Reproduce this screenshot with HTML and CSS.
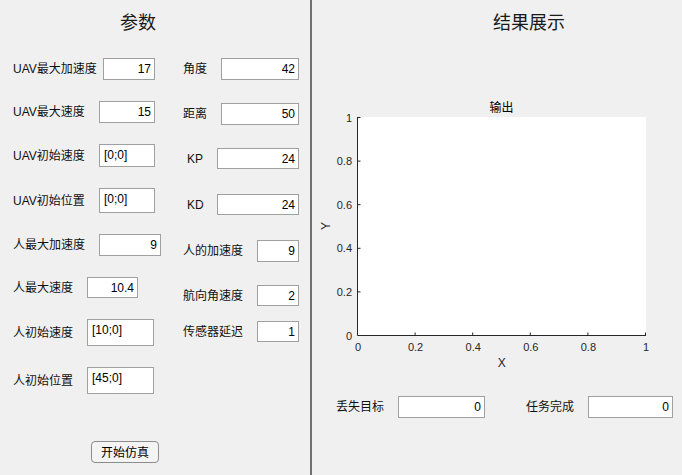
FILE: index.html
```html
<!DOCTYPE html>
<html lang="zh-CN">
<head>
<meta charset="utf-8">
<title>UAV 仿真</title>
<link rel="stylesheet" href="styles.css">
</head>
<body>
<div class="app">
  <section class="panel params">
    <h1 class="title params-title">参数</h1>
    <div class="fields">
      <div class="col col-a">
        <div class="field"><label class="lbl w90">UAV最大加速度</label><input class="box num i52 h22" value="17"></div>
        <div class="field"><label class="lbl w86">UAV最大速度</label><input class="box num i56 h22" value="15"></div>
        <div class="field"><label class="lbl w86">UAV初始速度</label><textarea class="box txt i56 h23">[0;0]</textarea></div>
        <div class="field"><label class="lbl w86">UAV初始位置</label><textarea class="box txt i56 h25">[0;0]</textarea></div>
        <div class="field"><label class="lbl w86">人最大加速度</label><input class="box num i62 h22" value="9"></div>
        <div class="field"><label class="lbl w74">人最大速度</label><input class="box num i51 h21" value="10.4"></div>
        <div class="field"><label class="lbl w74">人初始速度</label><textarea class="box txt i67 h27">[10;0]</textarea></div>
        <div class="field"><label class="lbl w74">人初始位置</label><textarea class="box txt i67 h27">[45;0]</textarea></div>
      </div>
      <div class="col col-b">
        <div class="field"><label class="lbl w38">角度</label><input class="box num i78 h22" value="42"></div>
        <div class="field"><label class="lbl w38">距离</label><input class="box num i78 h22" value="50"></div>
        <div class="field"><label class="lbl w30 indent">KP</label><input class="box num i82 h21" value="24"></div>
        <div class="field shift"><label class="lbl w30 indent">KD</label><input class="box num i82 h21" value="24"></div>
        <div class="field shift"><label class="lbl w74">人的加速度</label><input class="box num i42 h22" value="9"></div>
        <div class="field"><label class="lbl w74">航向角速度</label><input class="box num i42 h21" value="2"></div>
        <div class="field tight"><label class="lbl w74">传感器延迟</label><input class="box num i42 h21" value="1"></div>
      </div>
    </div>
    <button class="run-btn" type="button">开始仿真</button>
  </section>
  <section class="panel results">
    <h1 class="title results-title">结果展示</h1>
    <svg class="chart" width="370" height="280" viewBox="0 0 370 280" xmlns="http://www.w3.org/2000/svg">
      <text class="chart-title" x="189.5" y="17" text-anchor="middle">输出</text>
      <rect x="46" y="22" width="288" height="218" fill="#ffffff"/>
      <g stroke="#262626" stroke-width="1" fill="none">
        <path d="M45.5 22 V240.5 H334"/>
        <path d="M45.5 22.5 H48.5 M45.5 66.1 H48.5 M45.5 109.7 H48.5 M45.5 153.3 H48.5 M45.5 196.9 H48.5"/>
        <path d="M103.1 240.5 V237.5 M160.7 240.5 V237.5 M218.3 240.5 V237.5 M275.9 240.5 V237.5 M333.5 240.5 V237.5"/>
      </g>
      <g class="tick" text-anchor="end">
        <text x="40" y="26.5">1</text>
        <text x="40" y="70.1">0.8</text>
        <text x="40" y="113.7">0.6</text>
        <text x="40" y="157.3">0.4</text>
        <text x="40" y="200.9">0.2</text>
        <text x="40" y="244.5">0</text>
      </g>
      <g class="tick" text-anchor="middle">
        <text x="46" y="256">0</text>
        <text x="103.6" y="256">0.2</text>
        <text x="161.2" y="256">0.4</text>
        <text x="218.8" y="256">0.6</text>
        <text x="276.4" y="256">0.8</text>
        <text x="334" y="256">1</text>
      </g>
      <text class="axis-label" x="189.7" y="272" text-anchor="middle">X</text>
      <text class="axis-label" transform="translate(18 131) rotate(-90)" x="0" y="0" text-anchor="middle">Y</text>
    </svg>
    <div class="status">
      <label class="lbl w62">丢失目标</label><input class="box num i87 h22" value="0">
      <label class="lbl w62 gap-left">任务完成</label><input class="box num i85 h22" value="0">
    </div>
  </section>
</div>
</body>
</html>
```
FILE: styles.css
```css
html, body {
  margin: 0;
  padding: 0;
  width: 682px;
  height: 475px;
  overflow: hidden;
  background: #f0f0f0;
  font-family: "Liberation Sans", "Noto Sans CJK SC", sans-serif;
  font-size: 12px;
  color: #000;
}

.app {
  display: flex;
  width: 682px;
  height: 475px;
}

.panel {
  display: flex;
  flex-direction: column;
  box-sizing: border-box;
  height: 475px;
}

.params {
  width: 310px;
}

.results {
  width: 372px;
  border-left: 2px solid #707070;
}

.title {
  margin: 0;
  padding-top: 9px;
  font-weight: normal;
  font-size: 18px;
  line-height: 24px;
  font-family: "Noto Sans CJK SC", "Liberation Sans", sans-serif;
  color: #1a1a1a;
}

.params-title {
  padding-left: 120px;
}

.results-title {
  padding-left: 181px;
}

.fields {
  display: flex;
  margin-top: 25px;
}

.col {
  display: flex;
  flex-direction: column;
}

.col-a {
  width: 170px;
  padding-left: 13px;
  gap: 21px;
}

.col-b {
  gap: 23px;
}

.field {
  display: flex;
  align-items: center;
}

.shift {
  margin-top: 2px;
}

.tight {
  margin-top: -8px;
}

.lbl {
  display: block;
  flex: none;
  line-height: 16px;
  white-space: nowrap;
  color: #111;
}

.indent {
  padding-left: 4px;
}

.w90 { width: 90px; }
.w86 { width: 86px; }
.w74 { width: 74px; }
.w62 { width: 62px; }
.w38 { width: 38px; }
.w30 { width: 30px; }

.box {
  box-sizing: border-box;
  flex: none;
  margin: 0;
  border: 1px solid #a0a0a0;
  border-radius: 0;
  background: #ffffff;
  font-family: "Liberation Sans", "Noto Sans CJK SC", sans-serif;
  font-size: 12px;
  color: #000;
  outline: none;
}

.num {
  padding: 0 3px 0 4px;
  text-align: right;
  line-height: 14px;
}

.txt {
  padding: 3px 4px 0 4px;
  line-height: 14px;
  resize: none;
  overflow: hidden;
  text-align: left;
}

.i42 { width: 42px; }
.i51 { width: 51px; }
.i52 { width: 52px; }
.i56 { width: 56px; }
.i62 { width: 62px; }
.i67 { width: 67px; }
.i78 { width: 78px; }
.i82 { width: 82px; }
.i85 { width: 85px; }
.i87 { width: 87px; }

.h21 { height: 21px; }
.h22 { height: 22px; }
.h23 { height: 23px; }
.h25 { height: 25px; }
.h27 { height: 27px; }

.run-btn {
  align-self: flex-start;
  margin: 47px 0 0 91px;
  box-sizing: border-box;
  width: 68px;
  height: 22px;
  padding: 0;
  border: 1px solid #8c8c8c;
  border-radius: 4px;
  background: #f4f4f4;
  font-family: "Noto Sans CJK SC", "Liberation Sans", sans-serif;
  font-size: 12px;
  line-height: 18px;
  color: #000;
}

.chart {
  display: block;
  margin-top: 62px;
  flex: none;
}

.chart-title {
  font-family: "Noto Sans CJK SC", "Liberation Sans", sans-serif;
  font-size: 12px;
  fill: #000;
}

.tick text {
  font-family: "Liberation Sans", sans-serif;
  font-size: 11px;
  fill: #262626;
}

.axis-label {
  font-family: "Liberation Sans", sans-serif;
  font-size: 12px;
  fill: #262626;
}

.status {
  display: flex;
  align-items: center;
  margin-top: 21px;
  padding-left: 24px;
}

.gap-left {
  margin-left: 41px;
}
```
